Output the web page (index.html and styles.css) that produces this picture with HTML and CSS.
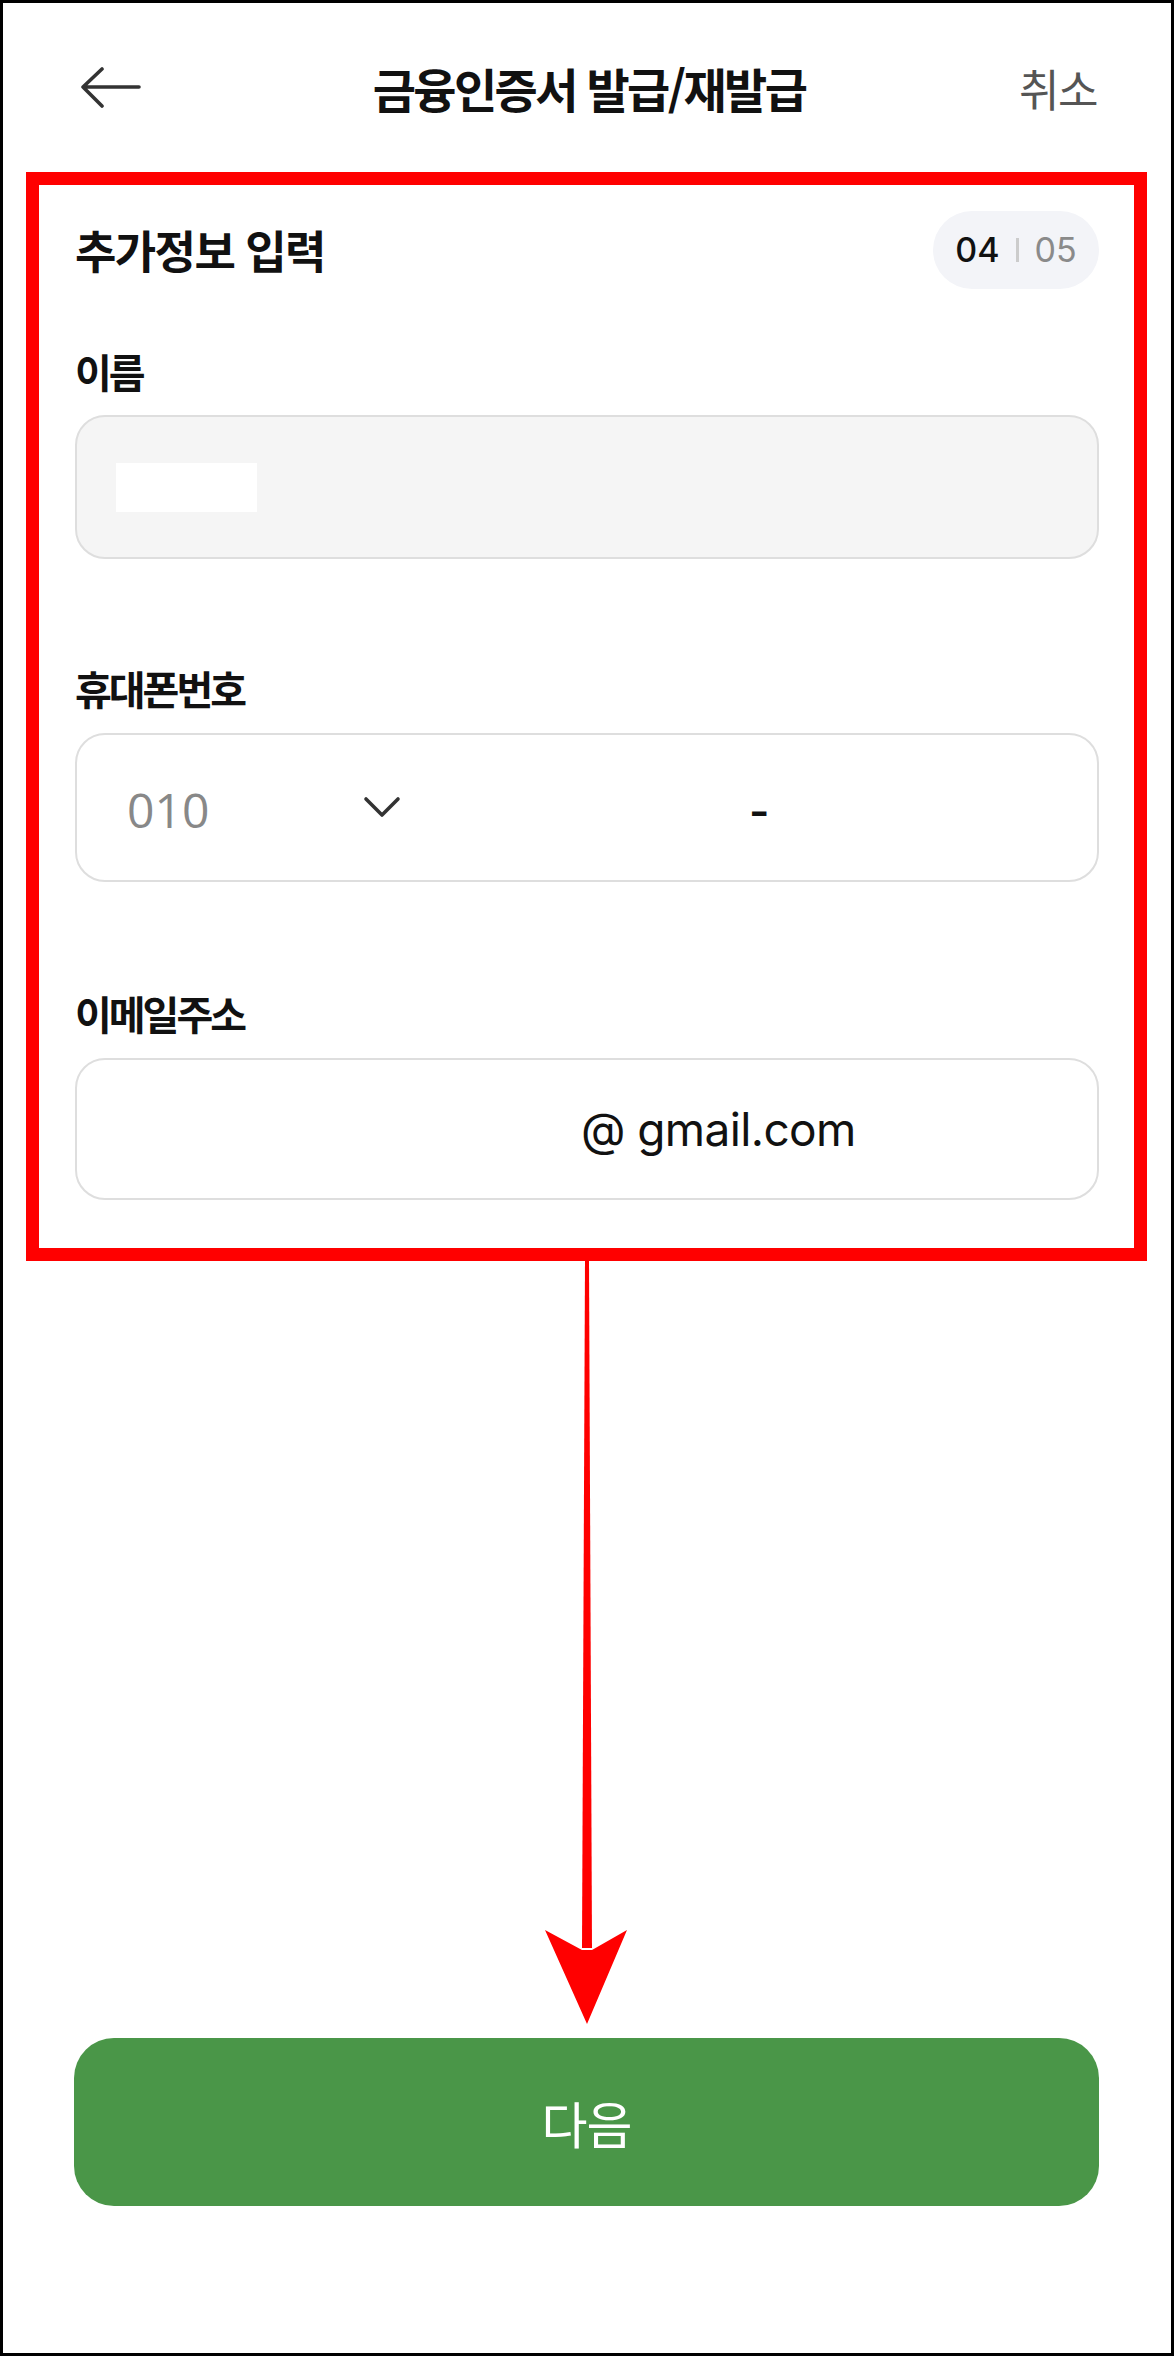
FILE: index.html
```html
<!DOCTYPE html>
<html lang="ko">
<head>
<meta charset="utf-8">
<title>금융인증서 발급/재발급</title>
<link rel="stylesheet" href="styles.css">
</head>
<body>
<div class="screen">
  <header class="topbar">
    <div class="topbar-left">
      <svg class="back-icon" width="60" height="42" viewBox="0 0 60 42" aria-hidden="true">
        <path d="M58 20 H2 M21 2 L2 20 L21 39" fill="none" stroke="#333" stroke-width="3.6" stroke-linecap="round" stroke-linejoin="round"/>
      </svg>
    </div>
    <h1 class="topbar-title">금융인증서 발급/재발급</h1>
    <div class="topbar-right"><span class="cancel">취소</span></div>
  </header>

  <section class="form-box">
    <div class="form-head">
      <h2 class="form-title">추가정보 입력</h2>
      <div class="step-pill"><span class="step-cur">04</span><span class="step-sep"></span><span class="step-total">05</span></div>
    </div>

    <label class="field-label label-first">이름</label>
    <div class="field field-name"><span class="redact"></span></div>

    <label class="field-label">휴대폰번호</label>
    <div class="field field-phone">
      <div class="prefix">
        <span class="prefix-num">010</span>
        <svg class="chev" width="38" height="22" viewBox="0 0 38 22" aria-hidden="true">
          <path d="M3 3 L19 19 L35 3" fill="none" stroke="#333" stroke-width="3.6" stroke-linecap="round" stroke-linejoin="round"/>
        </svg>
      </div>
      <span class="num-part"></span>
      <span class="dash">-</span>
      <span class="num-part num-last"></span>
    </div>

    <label class="field-label">이메일주소</label>
    <div class="field field-email">
      <span class="email-local"></span>
      <span class="email-domain">@ gmail.com</span>
    </div>
  </section>

  <button class="next-btn" type="button">다음</button>

  <svg class="annot" width="1174" height="2356" viewBox="0 0 1174 2356" aria-hidden="true">
    <polygon points="585,1261 589,1261 592,1948 582,1948" fill="#ff0000"/>
    <polygon points="545,1930 582,1950 592,1950 627,1930 587,2024" fill="#ff0000"/>
  </svg>
</div>
</body>
</html>
```

FILE: styles.css
```css
* { box-sizing: border-box; }
html, body { margin: 0; padding: 0; background: #fff; }
body {
  font-family: Inter, "Noto Sans CJK KR", "Noto Sans", sans-serif;
  color: #111;
}
.screen {
  position: relative;
  width: 1174px;
  height: 2356px;
  border: 3px solid #000;
  display: flex;
  flex-direction: column;
  overflow: hidden;
}
.topbar {
  height: 169px;
  flex: none;
  display: grid;
  grid-template-columns: 1fr auto 1fr;
  align-items: center;
  padding: 0 74px 0 78px;
}
.topbar-left { display: flex; align-items: center; }
.back-icon { display: block; }
.topbar-title {
  margin: 0;
  font-family: "Noto Sans CJK KR", sans-serif;
  font-size: 47px;
  font-weight: 700;
  letter-spacing: -2.6px;
  color: #111;
  line-height: 1;
}
.topbar-right { display: flex; justify-content: flex-end; }
.cancel {
  font-family: "Noto Sans CJK KR", sans-serif;
  font-size: 44px;
  font-weight: 400;
  letter-spacing: -1.5px;
  color: #555;
}
.form-box {
  flex: none;
  margin: 0 24px 0 23px;
  border: 13px solid #ff0000;
  padding: 25px 35px 48px 36px;
  display: flex;
  flex-direction: column;
}
.form-head {
  height: 79px;
  display: flex;
  align-items: center;
  justify-content: space-between;
}
.form-title {
  margin: 0;
  font-family: "Noto Sans CJK KR", sans-serif;
  font-size: 45px;
  font-weight: 700;
  letter-spacing: -1.6px;
  line-height: 1;
  color: #111;
}
.step-pill {
  width: 166px;
  height: 78px;
  border-radius: 39px;
  background: #f3f4f8;
  display: flex;
  align-items: center;
  justify-content: center;
  gap: 16px;
  font-family: Inter, sans-serif;
  font-size: 34px;
  line-height: 1;
}
.step-cur { color: #111; font-weight: 500; }
.step-sep { width: 3px; height: 24px; background: #ccc; }
.step-total { color: #8a8a8a; font-weight: 400; }
.field-label {
  display: block;
  margin-top: 104px;
  font-family: "Noto Sans CJK KR", sans-serif;
  font-size: 40px;
  font-weight: 700;
  letter-spacing: -3px;
  line-height: 50px;
  color: #111;
}
.field-label.label-first { margin-top: 57px; }
.field-label:last-of-type { margin-top: 106px; }
.field {
  margin-top: 19px;
  border: 2px solid #dedede;
  border-radius: 30px;
  background: #fff;
  display: flex;
  align-items: center;
}
.field-name {
  height: 144px;
  background: #f5f5f5;
  padding-left: 39px;
}
.redact {
  width: 141px;
  height: 49px;
  background: #fff;
}
.field-phone {
  margin-top: 20px;
  height: 149px;
  padding-left: 50px;
}
.prefix {
  width: 274px;
  display: flex;
  align-items: center;
  justify-content: space-between;
}
.prefix-num {
  font-family: "Open Sans", sans-serif;
  font-size: 48px;
  color: #888;
  line-height: 1;
  margin-top: 4px;
}
.chev { display: block; margin-top: -2px; }
.num-part { width: 348px; }
.dash {
  font-family: Inter, sans-serif;
  font-size: 44px;
  font-weight: 600;
  color: #111;
  line-height: 1;
  margin-top: 6px;
}
.num-last { flex: 1; }
.field-email {
  margin-top: 20px;
  height: 142px;
}
.email-local { width: 504px; flex: none; }
.email-domain {
  font-family: Inter, sans-serif;
  font-size: 46px;
  font-weight: 400;
  letter-spacing: -0.6px;
  color: #111;
  line-height: 1;
}
.next-btn {
  margin: auto 72px 147px 71px;
  height: 168px;
  border: none;
  border-radius: 40px;
  background: #4a9648;
  color: #fff;
  font-family: "Noto Sans CJK KR", sans-serif;
  font-size: 50px;
  font-weight: 400;
  letter-spacing: -1px;
  padding: 0;
}
.annot {
  position: absolute;
  top: -3px;
  left: -3px;
  pointer-events: none;
}
```
